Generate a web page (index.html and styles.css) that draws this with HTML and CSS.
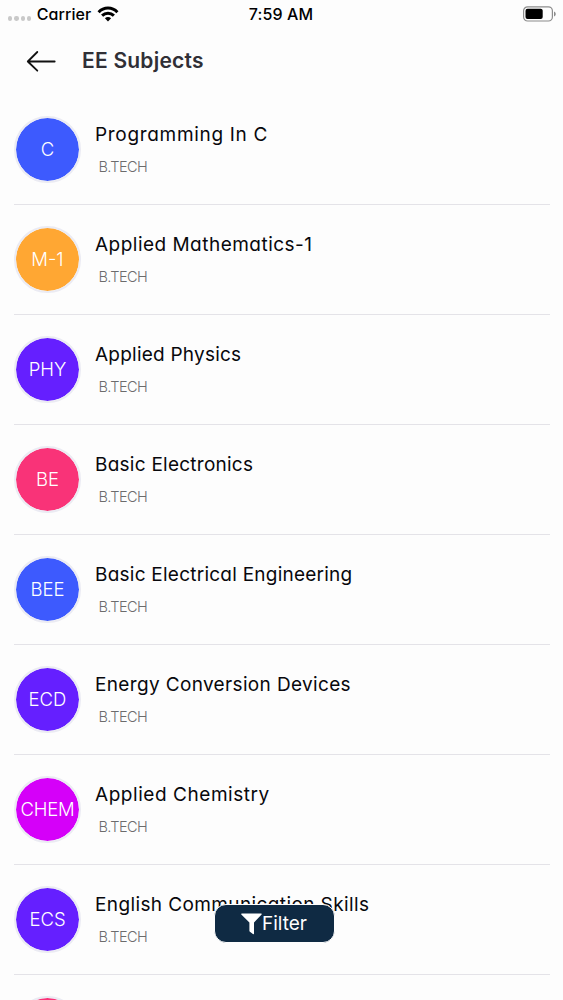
FILE: index.html
```html
<!DOCTYPE html>
<html lang="en">
<head>
<meta charset="utf-8">
<title>EE Subjects</title>
<link rel="stylesheet" href="styles.css">
</head>
<body>
<div class="screen">
  <div class="status">
    <div class="carrier">
      <span class="signal"><i></i><i></i><i></i><i></i></span>
      <span class="carrier-name">Carrier</span>
      <svg class="wifi" width="22" height="16" viewBox="0 0 22 16" fill="none" stroke="#000" stroke-width="3"><path d="M1.600 6.200C6.800.7 15.200.7 20.400 6.200M5.100 9.700c3.400-3.300 8.400-3.300 11.800 0"/><path d="M11 15.400l-3.100-3.100c1.700-1.600 4.500-1.600 6.200 0z" fill="#000" stroke="none"/></svg>
    </div>
    <span class="time">7:59 AM</span>
    <svg class="battery" width="34" height="16" viewBox="0 0 34 16"><rect x="1.600" y=".8" width="28.800" height="14.200" rx="4" fill="none" stroke="#8c8c8c" stroke-width="1.200"/><rect x="3.500" y="2.700" width="17.200" height="10.400" rx="2" fill="#000"/><path d="M32 5.400c2.300.9 2.300 4.100 0 5z" fill="#8c8c8c"/></svg>
  </div>
  <header class="header">
    <svg class="back" width="30" height="22" viewBox="0 0 30 22" fill="none" stroke="#111" stroke-width="1.800" stroke-linecap="round" stroke-linejoin="round"><path d="M28.700 11.500H1.800M11.300 2L1.800 11.500l9.500 9.200"/></svg>
    <h1 class="heading">EE Subjects</h1>
  </header>
  <main class="list">
    <div class="row"><div class="avatar blue">C</div><div class="info"><div class="name prog">Programming In C</div><div class="course">B.TECH</div></div></div>
    <div class="row"><div class="avatar orange">M-1</div><div class="info"><div class="name math">Applied Mathematics-1</div><div class="course">B.TECH</div></div></div>
    <div class="row"><div class="avatar violet">PHY</div><div class="info"><div class="name phys">Applied Physics</div><div class="course">B.TECH</div></div></div>
    <div class="row"><div class="avatar pink">BE</div><div class="info"><div class="name elec">Basic Electronics</div><div class="course">B.TECH</div></div></div>
    <div class="row"><div class="avatar blue">BEE</div><div class="info"><div class="name engi">Basic Electrical Engineering</div><div class="course">B.TECH</div></div></div>
    <div class="row"><div class="avatar violet">ECD</div><div class="info"><div class="name conv">Energy Conversion Devices</div><div class="course">B.TECH</div></div></div>
    <div class="row"><div class="avatar magenta chem-code">CHEM</div><div class="info"><div class="name chem">Applied Chemistry</div><div class="course">B.TECH</div></div></div>
    <div class="row"><div class="avatar violet">ECS</div><div class="info"><div class="name comm">English Communication Skills</div><div class="course">B.TECH</div></div></div>
    <div class="row"><div class="avatar pink"></div></div>
  </main>
  <button class="filter"><svg width="21" height="22" viewBox="0 0 21 22" fill="#fff"><path d="M.8.5h19.400c.6 0 .7.600.4 1L13 9.600v11c0 .7-.6.900-1.100.500l-3-2.300c-.4-.3-.5-.5-.5-1V9.600L.3 1.500C0 1 .2.500.8.500z"/></svg><span>Filter</span></button>
</div>
</body>
</html>
```

FILE: styles.css
```css
* { box-sizing: border-box; }
body { margin: 0; background: #fdfdfd; font-family: Inter, "Liberation Sans", sans-serif; font-feature-settings: "cv11"; }
.screen { position: relative; width: 563px; height: 1000px; overflow: hidden; background: #fdfdfd; }
.status { display: grid; grid-template-columns: 1fr auto 1fr; align-items: center; height: 28px; padding: 0 8px 0 8px; font-size: 16px; font-weight: 500; color: #000; }
.carrier { display: flex; align-items: center; }
.signal { display: flex; gap: 2px; padding-top: 9px; }
.signal i { width: 4.300px; height: 4.300px; border-radius: 50%; background: #c9c9c9; }
.carrier-name { margin-left: 5.500px; letter-spacing: 0.100px; }
.wifi { margin-left: 5.500px; }
.time { letter-spacing: 0.100px; margin-left: -1px; }
.battery { justify-self: end; margin-right: -1px; }
.header { display: flex; align-items: center; height: 66px; padding-left: 26px; }
.back { flex: none; }
.heading { margin: 0 0 0 26px; font-size: 21px; line-height: 30px; font-weight: 600; letter-spacing: 0.220px; color: #302f36; white-space: nowrap; }
.list { padding: 0 13px 0 14px; }
.row { display: flex; height: 110px; padding-top: 21px; border-bottom: 1px solid #e4e3e8; }
.list .row:first-child { height: 111px; padding-top: 22px; }
.avatar { flex: none; display: flex; align-items: center; justify-content: center; width: 67px; height: 67px; padding-bottom: 2px; border: 2px solid #ebebf3; border-radius: 50%; background-clip: padding-box; color: #fff; font-size: 18.500px; font-weight: 300; white-space: nowrap; }
.chem-code { letter-spacing: -0.200px; }
.blue { background-color: #3d5afe; }
.orange { background-color: #ffa733; }
.violet { background-color: #651fff; }
.pink { background-color: #f93378; }
.magenta { background-color: #d500f9; }
.info { padding: 5px 0 0 14px; }
.name { font-size: 19px; line-height: 28px; color: #08080c; white-space: nowrap; }
.prog { letter-spacing: 0.680px; }
.math { letter-spacing: 0.480px; }
.phys { letter-spacing: 0.230px; }
.elec { letter-spacing: 0.250px; }
.engi { letter-spacing: 0.240px; }
.conv { letter-spacing: 0.350px; }
.chem { letter-spacing: 0.550px; }
.comm { letter-spacing: 0.390px; }
.course { margin-top: 7px; padding-left: 3.500px; font-size: 14.500px; line-height: 22px; font-weight: 300; letter-spacing: -0.600px; color: #6c6c6c; }
.filter { position: absolute; left: 214px; top: 904px; width: 121px; height: 39px; padding: 0 1px 0 0; display: flex; align-items: center; justify-content: center; border: 1px solid #fdfdfd; border-radius: 12px; background: #0f2a43; color: #fff; font: 400 19px Inter, sans-serif; }
```
